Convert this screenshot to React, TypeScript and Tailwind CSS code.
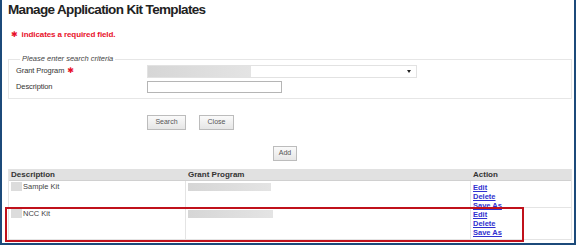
import React from 'react'

const font = { fontFamily: '"Liberation Sans", Arial, sans-serif' }
const starFont = { fontFamily: '"DejaVu Sans", sans-serif' }

function Blur({ className }: { className: string }) {
    return <div className={`bg-gradient-to-r from-[#d6d6d6] via-[#dddddd] to-[#e4e4e4] ${className}`}></div>
}

function Actions() {
    return (
        <div className="flex flex-col text-[7.5px] leading-[9px] text-[#3030d0] underline font-bold pt-[2px]">
            <span>Edit</span>
            <span>Delete</span>
            <span>Save As</span>
        </div>
    )
}

export default function App() {
    const kits = [
        { id: 1, name: 'Sample Kit', h: 'h-[27px]', bw: 'w-[83px]' },
        { id: 2, name: 'NCC Kit', h: 'h-[32px]', bw: 'w-[85px]' },
    ]

    return (
        <div style={font} className="relative w-[576px] h-[245px] bg-white border-x-2 border-b-2 border-[#1c4a7a] overflow-hidden">
            <div className="pl-[6px] pr-[2px] flex flex-col">
                {/* Title */}
                <h1 className="text-[13.5px] font-bold text-[#222] leading-[18px] pt-[1px] tracking-[-0.65px]">
                    Manage Application Kit Templates
                </h1>

                {/* Required note */}
                <div className="flex items-center gap-[4px] mt-[10px] pl-[3px] text-[8px] tracking-[-0.1px] font-bold text-[#e8102a] leading-[12px]">
                    <span style={starFont} className="text-[8px]">✱</span>
                    <span>indicates a required field.</span>
                </div>

                {/* Search criteria */}
                <fieldset className="mt-[13px] border border-[#e6e6e6] h-[45px] px-[7px] pb-[4px]">
                    <legend className="ml-[4px] px-[2px] text-[7.5px] italic text-[#444] leading-[10px]">Please enter search criteria</legend>
                    <div className="flex items-center h-[14px]">
                        <span className="w-[131px] flex items-center gap-[3px] text-[7.5px] tracking-[-0.1px] text-[#333]">
                            Grant Program
                            <span style={starFont} className="text-[#e8102a] text-[8px]">✱</span>
                        </span>
                        <div className="relative w-[270px] h-[13px] border border-[#e2e2e2] bg-white flex items-center">
                            <Blur className="w-[103px] h-[11px]" />
                            <span className="absolute right-[5px] top-[4px] w-0 h-0 border-x-[2.5px] border-x-transparent border-t-[3px] border-t-[#222]"></span>
                        </div>
                    </div>
                    <div className="flex items-center h-[14px] mt-[2px]">
                        <span className="w-[131px] text-[7.5px] tracking-[-0.1px] text-[#333]">Description</span>
                        <div className="w-[135px] h-[12px] border border-[#b5b5b5] bg-white"></div>
                    </div>
                </fieldset>

                {/* Search / Close */}
                <div className="flex gap-[13px] ml-[139px] mt-[16px]">
                    <button className="w-[39px] h-[15px] border border-[#bcbcbc] bg-gradient-to-b from-[#fafafa] to-[#e6e6e6] text-[7px] text-[#555]">Search</button>
                    <button className="w-[35px] h-[15px] border border-[#bcbcbc] bg-gradient-to-b from-[#fafafa] to-[#e6e6e6] text-[7px] text-[#555]">Close</button>
                </div>

                {/* Add */}
                <div className="flex ml-[265px] mt-[16px]">
                    <button className="w-[24px] h-[15px] border border-[#bcbcbc] bg-gradient-to-b from-[#fafafa] to-[#e6e6e6] text-[7px] text-[#555]">Add</button>
                </div>

                {/* Results table */}
                <div className="mt-[8px] border-x border-[#e4e4e4] text-[7.5px]">
                    <div className="flex h-[12px] bg-[#e1e1e1] border-b border-[#d0d0d0] font-bold text-[#333] text-[8px] leading-[12px]">
                        <div className="w-[177px] pl-[2px]">Description</div>
                        <div className="w-[285px] pl-[2px]">Grant Program</div>
                        <div className="flex-1 pl-[2px]">Action</div>
                    </div>
                    {kits.map((k) => (
                        <div key={k.id} className={`flex ${k.h} border-b border-[#e4e4e4] text-[#444]`}>
                            <div className="w-[177px] pl-[2px] pt-[1px] flex items-start gap-[1px] border-r border-[#e4e4e4]">
                                <div className="w-[11px] h-[9px] bg-[#dcdcdc]"></div>
                                <span className="leading-[10px]">{k.name}</span>
                            </div>
                            <div className="w-[285px] pl-[2px] pt-[2px] border-r border-[#e4e4e4]">
                                <Blur className={`${k.bw} h-[8px]`} />
                            </div>
                            <div className="flex-1 pl-[2px]">
                                <Actions />
                            </div>
                        </div>
                    ))}
                </div>
            </div>

            {/* Highlight annotation */}
            <div className="absolute left-[3px] top-[207px] w-[519px] h-[35px] border-2 border-[#c0111b] pointer-events-none"></div>
        </div>
    )
}
